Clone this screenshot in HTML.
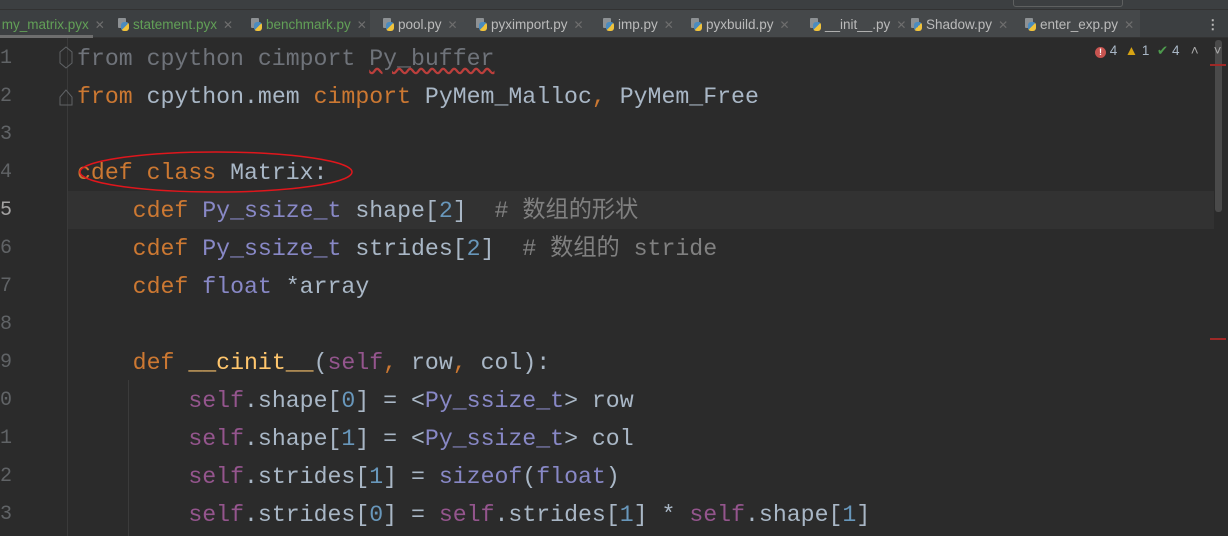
<!DOCTYPE html>
<html><head><meta charset="utf-8"><style>
*{margin:0;padding:0;box-sizing:border-box}
body{width:1228px;height:536px;overflow:hidden;background:#2b2b2b;position:relative;font-family:"Liberation Mono",monospace}
#top{position:absolute;left:0;top:0;width:1228px;height:10px;background:#3c3f41;border-bottom:1px solid #323232}
#tabs{position:absolute;left:0;top:10px;width:1228px;height:28px;background:#3c3f41;border-bottom:1px solid #323232}
.tab{position:absolute;top:1px;height:28px;font:13.5px "Liberation Sans",sans-serif;line-height:28px;color:#bbbbbb;white-space:nowrap}
.tab.g{color:#62a057}
.tab .x{color:#6e6e6e;margin-left:6px;font-size:12px}
.ic{display:inline-block;width:11px;height:13px;vertical-align:-2px;margin-right:4px;position:relative}
.ic:before{content:"";position:absolute;left:0;top:0;width:8px;height:10px;background:#8d9194;border-radius:1px}
.ic:after{content:"";position:absolute;left:3px;top:4px;width:8px;height:9px;background:linear-gradient(135deg,#4b8bbe 50%,#f0c33c 50%);border-radius:3px}
#gutterline{position:absolute;left:67px;top:38px;width:1px;height:498px;background:#3a3a3a}
#hl{position:absolute;left:68px;top:191px;width:1146px;height:38px;background:#323232}
.ln{position:absolute;left:-4px;width:16px;font-size:20px;color:#606366;text-align:right;line-height:38px}
.l{position:absolute;left:77px;font-size:23.2px;line-height:38px;height:38px;color:#a9b7c6;white-space:pre}
.k{color:#cc7832}.t{color:#8888c6}.s{color:#94558d}.n{color:#6897bb}.c{color:#808080}.f{color:#ffc66d}.u{color:#6f737a}
#guide{position:absolute;left:128px;top:380px;width:1px;height:156px;background:#3b3b3b}
#sb{position:absolute;left:1215px;top:40px;width:7px;height:172px;background:#4a4a4a;border-radius:3px}
</style></head><body>
<div id="top"><div style="position:absolute;left:1013px;top:-3px;width:110px;height:10px;border:1px solid #5e6060;border-radius:3px"></div></div>
<div id="tabs">
<div style="position:absolute;left:0;top:25px;width:93px;height:3px;background:#6e6e6e"></div>
<div class="tab g" style="left:-2px">&nbsp;my_matrix.pyx<span class="x">✕</span></div>
<div class="tab g" style="left:118px"><span class="ic"></span>statement.pyx<span class="x">✕</span></div>
<div class="tab g" style="left:251px"><span class="ic"></span>benchmark.py<span class="x">✕</span></div>
<div style="position:absolute;left:370px;top:0;width:770px;height:27px;background:#45484a"></div>
<div class="tab" style="left:383px"><span class="ic"></span>pool.py<span class="x">✕</span></div>
<div class="tab" style="left:476px"><span class="ic"></span>pyximport.py<span class="x">✕</span></div>
<div class="tab" style="left:603px"><span class="ic"></span>imp.py<span class="x">✕</span></div>
<div class="tab" style="left:691px"><span class="ic"></span>pyxbuild.py<span class="x">✕</span></div>
<div class="tab" style="left:810px"><span class="ic"></span>__init__.py<span class="x">✕</span></div>
<div class="tab" style="left:911px"><span class="ic"></span>Shadow.py<span class="x">✕</span></div>
<div class="tab" style="left:1025px"><span class="ic"></span>enter_exp.py<span class="x">✕</span></div>
<div class="tab" style="left:1206px;font-weight:bold">⋮</div>
</div>
<div id="gutterline"></div>
<div id="hl"></div>
<div id="guide"></div>
<div id="sb"></div>
<div style="position:absolute;left:1210px;top:64px;width:16px;height:2px;background:#9e2927"></div>
<div style="position:absolute;left:1210px;top:338px;width:16px;height:2px;background:#9e2927"></div>
<div style="position:absolute;left:1095px;top:43px;font:13.5px 'Liberation Sans',sans-serif;color:#a9b7c6;white-space:nowrap">
<span style="display:inline-block;width:11px;height:11px;border-radius:50%;background:#c75450;color:#fff;font-size:9px;text-align:center;line-height:11px;font-weight:bold">!</span> 4&nbsp; <span style="color:#d6a313">▲</span> 1&nbsp; <span style="color:#4d9a4d">✔</span> 4&nbsp;&nbsp; <span style="color:#aaa">˄</span>&nbsp;&nbsp;&nbsp; <span style="color:#aaa">˅</span></div>
<div class="ln" style="top:40px">1</div><div class="ln" style="top:78px">2</div><div class="ln" style="top:116px">3</div><div class="ln" style="top:154px">4</div><div class="ln" style="top:192px;color:#a4a3a3">5</div><div class="ln" style="top:230px">6</div><div class="ln" style="top:268px">7</div><div class="ln" style="top:306px">8</div><div class="ln" style="top:344px">9</div><div class="ln" style="top:382px">0</div><div class="ln" style="top:420px">1</div><div class="ln" style="top:458px">2</div><div class="ln" style="top:496px">3</div>
<div class="l u" style="top:40px">from cpython cimport <span style="text-decoration:underline wavy #bc3f3c">Py_buffer</span></div>
<div class="l" style="top:78px"><span class="k">from</span> cpython.mem <span class="k">cimport</span> PyMem_Malloc<span class="k">,</span> PyMem_Free</div>
<div class="l" style="top:154px"><span class="k">cdef class</span> Matrix:</div>
<div class="l" style="top:192px">    <span class="k">cdef</span> <span class="t">Py_ssize_t</span> shape[<span class="n">2</span>]  <span class="c"># 数组的形状</span></div>
<div class="l" style="top:230px">    <span class="k">cdef</span> <span class="t">Py_ssize_t</span> strides[<span class="n">2</span>]  <span class="c"># 数组的 stride</span></div>
<div class="l" style="top:268px">    <span class="k">cdef</span> <span class="t">float</span> *array</div>
<div class="l" style="top:344px">    <span class="k">def</span> <span class="f">__cinit__</span>(<span class="s">self</span><span class="k">,</span> row<span class="k">,</span> col):</div>
<div class="l" style="top:382px">        <span class="s">self</span>.shape[<span class="n">0</span>] = &lt;<span class="t">Py_ssize_t</span>&gt; row</div>
<div class="l" style="top:420px">        <span class="s">self</span>.shape[<span class="n">1</span>] = &lt;<span class="t">Py_ssize_t</span>&gt; col</div>
<div class="l" style="top:458px">        <span class="s">self</span>.strides[<span class="n">1</span>] = <span class="t">sizeof</span>(<span class="t">float</span>)</div>
<div class="l" style="top:496px">        <span class="s">self</span>.strides[<span class="n">0</span>] = <span class="s">self</span>.strides[<span class="n">1</span>] * <span class="s">self</span>.shape[<span class="n">1</span>]</div>
<svg style="position:absolute;left:0;top:0" width="1228" height="536">
<path d="M60 52 L66 47 L72 52 L72 63 L66 68 L60 63 Z" fill="none" stroke="#606366" stroke-width="1"/>
<path d="M60 97 L66 90 L72 97 L72 105 L60 105 Z" fill="none" stroke="#606366" stroke-width="1"/>
<ellipse cx="216" cy="172" rx="136" ry="20" fill="none" stroke="#e0161c" stroke-width="1.5"/>
</svg>
</body></html>
